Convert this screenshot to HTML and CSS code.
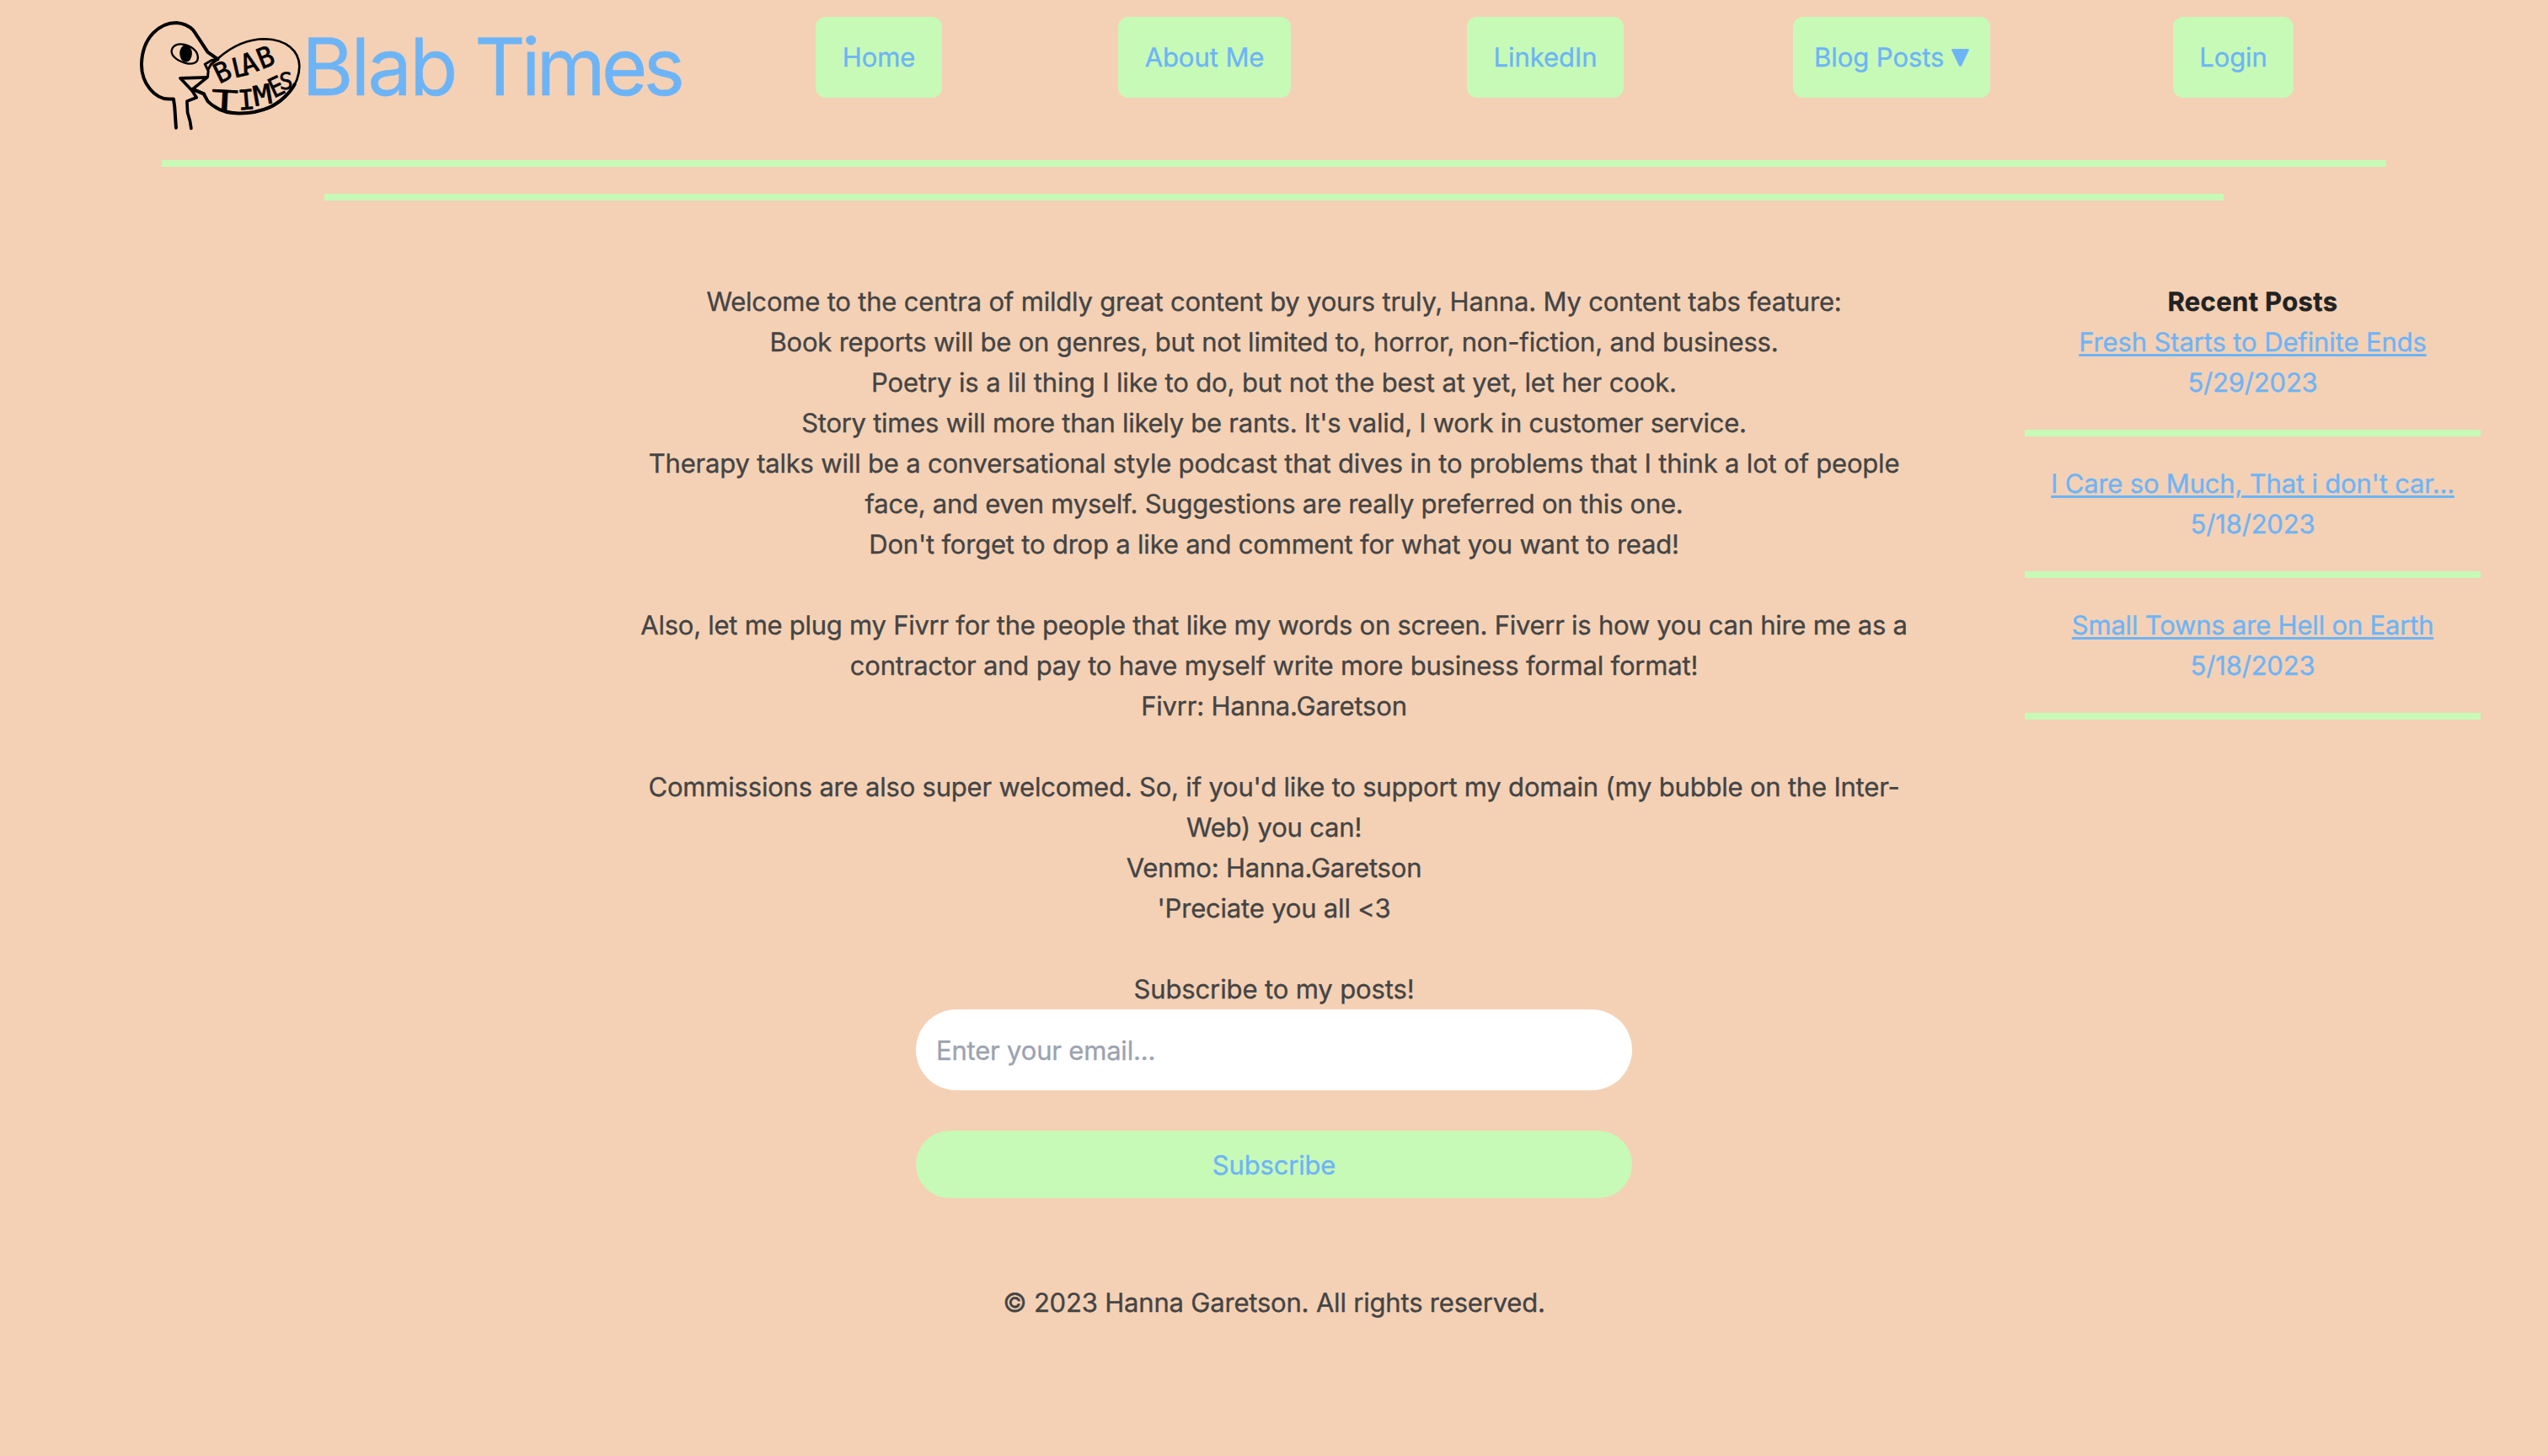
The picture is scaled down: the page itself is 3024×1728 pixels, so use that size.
FILE: index.html
```html
<!DOCTYPE html>
<html lang="en">
<head>
<meta charset="utf-8">
<title>Blab Times</title>
<link rel="stylesheet" href="styles.css">
</head>
<body>
<header class="header">
  <a class="brand">
    <svg class="logo" viewBox="45 30 580 410" fill="none" stroke="#000" stroke-linecap="round" stroke-linejoin="round">
      <path d="M177 425L172 350L168 322L150 322C105 322 52 270 54 195C58 100 120 50 178 50C205 52 225 63 238 76L262 112L290 155L326 180" stroke-width="12"/>
      <path d="M231 427L227 402L218 370L216 330L250 317L234 292L192 248L288 245L236 287L277 304" stroke-width="11"/>
      <path d="M290 243L292 222L280 198L304 184L326 180L302 198L291 218" stroke-width="9"/>
      <path d="M326 178C380 130 440 108 495 108C570 110 616 150 617 205C616 270 570 330 500 358" stroke-width="8"/>
      <path d="M236 287L276 304L290 330C325 365 365 374 405 373C440 373 475 368 510 352C550 334 585 298 600 270" stroke-width="12"/>
      <path d="M161 150C165 128 185 124 207 128C235 136 255 152 255 176C254 193 238 198 220 196C188 190 160 172 161 150Z" stroke-width="7"/>
      <ellipse cx="212" cy="160" rx="20" ry="29" fill="#000" stroke-width="4"/>
      <g class="lettering" fill="#000" stroke-width="2">
        <text transform="translate(331 269) rotate(-26) scale(1 1.02)">B</text>
        <text transform="translate(384 248) rotate(-13)">L</text>
        <text transform="translate(419 238) rotate(-18) scale(1.05 1.05)">A</text>
        <text transform="translate(482 217) rotate(-22) scale(1 1.05)">B</text>
        <text transform="translate(301 359) rotate(3) scale(1.65 1.02)">T</text>
        <text transform="translate(400 362) rotate(-5) scale(1.05 1.02)">I</text>
        <text transform="translate(458 348) rotate(-10) scale(1.15 1.02)">M</text>
        <text transform="translate(525 320) rotate(-25) scale(.9 1)">E</text>
        <text transform="translate(546 288) rotate(-3) scale(.85 .86)">S</text>
      </g>
    </svg>
    <span class="brand-name"><span class="brand-first">Blab</span> <span class="brand-last">Times</span></span>
  </a>
  <nav class="nav">
    <a class="nav-btn home">Home</a>
    <a class="nav-btn about">About Me</a>
    <a class="nav-btn linkedin">LinkedIn</a>
    <a class="nav-btn blog">Blog Posts <svg class="caret" viewBox="0 0 21 21"><path d="M1.500 0H19.500Q21.500 0 20.500 2.200L12 20Q10.500 22 9 20L.5 2.200Q-.5 0 1.500 0Z"/></svg></a>
    <a class="nav-btn login">Login</a>
  </nav>
</header>
<hr class="rule rule-wide">
<hr class="rule rule-narrow">
<div class="layout">
  <main class="main">
    <p>Welcome to the centra of mildly great content by yours truly, Hanna. My content tabs feature:</p>
    <p class="medium">Book reports will be on genres, but not limited to, horror, non-fiction, and business.</p>
    <p class="loose">Poetry is a lil thing I like to do, but not the best at yet, let her cook.</p>
    <p class="tight">Story times will more than likely be rants. It's valid, I work in customer service.</p>
    <p>Therapy talks will be a conversational style podcast that dives in to problems that I think a lot of people<br><span class="tight">face, and even myself. Suggestions are really preferred on this one.</span></p>
    <p class="medium">Don't forget to drop a like and comment for what you want to read!</p>
    <br>
    <p class="tight">Also, let me plug my Fivrr for the people that like my words on screen. Fiverr is how you can hire me as a<br><span class="medium">contractor and pay to have myself write more business formal format!</span></p>
    <p>Fivrr: Hanna.Garetson</p>
    <br>
    <p class="medium">Commissions are also super welcomed. So, if you'd like to support my domain (my bubble on the Inter-<br>Web) you can!</p>
    <p>Venmo: Hanna.Garetson</p>
    <p>'Preciate you all &lt;3</p>
    <br>
    <form class="subscribe">
      <label class="loose" for="email">Subscribe to my posts!</label>
      <input class="email" id="email" type="email" placeholder="Enter your email...">
      <button class="submit" type="button">Subscribe</button>
    </form>
  </main>
  <aside class="recent">
    <h2 class="recent-title">Recent Posts</h2>
    <article class="post"><a class="loose">Fresh Starts to Definite Ends</a><time>5/29/2023</time></article>
    <article class="post"><a>I Care so Much, That i don't car...</a><time>5/18/2023</time></article>
    <article class="post"><a>Small Towns are Hell on Earth</a><time>5/18/2023</time></article>
  </aside>
</div>
<footer class="footer">© 2023 Hanna Garetson. All rights reserved.</footer>
</body>
</html>
```
FILE: styles.css
```css
:root {
  --green: #c7fab7;
  --blue: #6db4f7;
}

* { box-sizing: border-box; }

body {
  margin: 0;
  min-height: 1728px;
  background: #f4d1b5;
  color: #444;
  font: 31px/48px Inter, "Liberation Sans", sans-serif;
  letter-spacing: -0.19px;
  text-rendering: geometricPrecision;
  -webkit-text-stroke: 0.35px currentColor;
}

p { margin: 0; }
.loose { letter-spacing: -0.12px; }
.medium { letter-spacing: -0.2px; }
.tight { letter-spacing: -0.26px; }

.header {
  display: flex;
  align-items: flex-start;
  height: 190px;
  padding: 20px 302px 0 165px;
}

.brand { display: flex; width: 803px; }
.logo { width: 193px; height: 137px; }

.lettering {
  font-family: "DejaVu Sans Mono", monospace;
  font-size: 96px;
  letter-spacing: 0;
}

.brand-name {
  margin-top: 12px;
  color: var(--blue);
  font-size: 94px;
  line-height: 94px;
  letter-spacing: -4.1px;
  white-space: nowrap;
}

.brand-first { letter-spacing: -3px; }
.brand-last { letter-spacing: -5px; }

.nav {
  display: flex;
  flex: 1;
  justify-content: space-between;
}

.nav-btn {
  padding: 25px 0 23px;
  border-radius: 12px;
  background: var(--green);
  color: var(--blue);
  letter-spacing: -0.06px;
  text-align: center;
  white-space: nowrap;
}

.home { width: 150px; }
.about { width: 205px; }
.linkedin { width: 186px; }
.blog { width: 234px; margin: 0 8px 0 -8px; }
.login { width: 143px; }

.caret {
  width: 21px;
  height: 21px;
  fill: currentColor;
}

.rule {
  height: 8px;
  margin: 0 auto 32px;
  border: 0;
  background: var(--green);
}

.rule-wide { width: 2640px; }
.rule-narrow { width: 2254px; margin-bottom: 97px; }

.layout {
  display: grid;
  grid-template-columns: 1512px 541px;
  column-gap: 135px;
  padding-left: 756px;
  text-align: center;
  white-space: nowrap;
}

.subscribe {
  display: flex;
  flex-direction: column;
  width: 850px;
  margin: 0 auto;
}

.email {
  height: 96px;
  margin: -1px 0 48px;
  padding: 0 24px;
  border: 0;
  border-radius: 48px;
  background: #fff;
  font: inherit;
  letter-spacing: inherit;
}

.email::placeholder { color: #9ca3af; }

.submit {
  height: 80px;
  padding: 1px 0 0;
  border: 0;
  border-radius: 40px;
  background: var(--green);
  color: var(--blue);
  font: inherit;
  letter-spacing: inherit;
}

.recent { color: var(--blue); }

.recent-title {
  margin: 0;
  color: #222;
  font-size: 31px;
  font-weight: 700;
  letter-spacing: 0.35px;
}

.post {
  display: flex;
  flex-direction: column;
  align-items: center;
  margin-bottom: 33px;
  padding-bottom: 31px;
  border-bottom: 8px solid var(--green);
}

.post a {
  text-decoration: underline;
  text-decoration-thickness: 3px;
  text-underline-offset: 3px;
}

.footer {
  margin-top: 101px;
  text-align: center;
}
```
